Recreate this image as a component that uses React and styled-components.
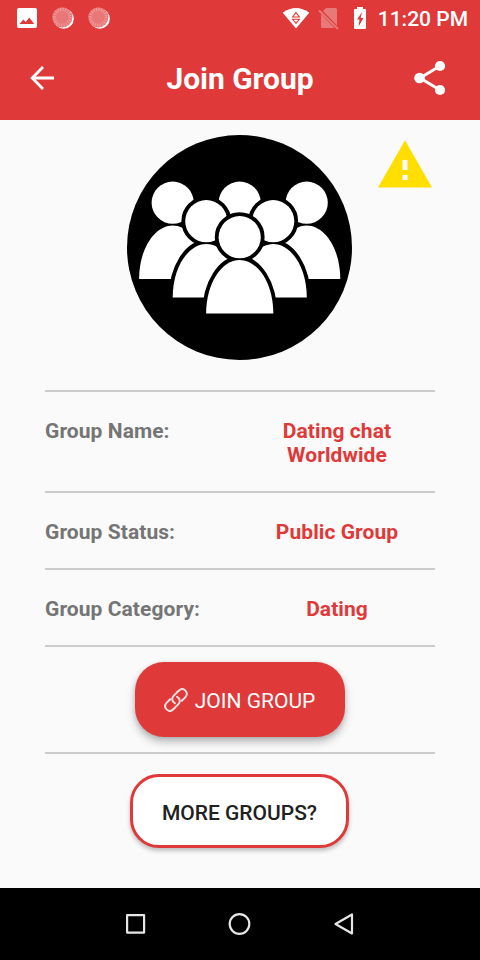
import React from "react";
import styled, { createGlobalStyle } from "styled-components";

const RED = "#df3939";

const GlobalStyle = createGlobalStyle`
  * { box-sizing: border-box; }
  body { margin: 0; background: #fafafa; }
`;

const Screen = styled.div`
  width: 480px;
  height: 960px;
  display: flex;
  flex-direction: column;
  overflow: hidden;
  background: #fafafa;
  font-family: Roboto, sans-serif;

  svg { display: block; flex: none; }
`;

const StatusBar = styled.div`
  height: 36px;
  display: flex;
  align-items: center;
  justify-content: space-between;
  padding: 0 12px 0 16px;
  background: ${RED};
`;

const StatusGroup = styled.div`
  display: flex;
  align-items: center;
  gap: ${(p) => p.$gap}px;
`;

const Clock = styled.span`
  margin-left: -2px;
  color: #fff;
  font-size: 21px;
  font-weight: 500;
  line-height: 24px;
  padding-top: 2px;
  white-space: nowrap;
`;

const AppBar = styled.header`
  height: 84px;
  display: grid;
  grid-template-columns: 84px 1fr 84px;
  align-items: center;
  justify-items: center;
  background: ${RED};
`;

const Title = styled.h1`
  margin: 0;
  padding-top: 1px;
  color: #fff;
  font-size: 30px;
  font-weight: 700;
  line-height: 36px;
  letter-spacing: -0.05px;
  white-space: nowrap;
`;

const IconButton = styled.button`
  width: 84px;
  height: 84px;
  display: flex;
  align-items: center;
  justify-content: center;
  border: 0;
  padding: 0 ${(p) => p.$inset || 0}px 0 0;
  background: none;
`;

const Content = styled.main`
  height: 768px;
  display: flex;
  flex-direction: column;
  padding: 15px 45px 0;
`;

const Hero = styled.section`
  height: 255px;
  display: grid;
  grid-template-columns: 82px 225px 1fr;
  align-items: start;

  svg:last-child { margin: 5px 0 0 26px; }
`;

const Row = styled.div`
  height: ${(p) => p.$height}px;
  display: flex;
  flex: none;
  padding-top: 27px;
  border-top: 2px solid #cccccc;
  font-size: 21px;
  font-weight: 700;
  line-height: 24px;
  letter-spacing: 0.07px;
`;

const Label = styled.span`
  width: 195px;
  color: #757575;
`;

const Value = styled.span`
  width: 150px;
  margin-left: 22px;
  color: ${RED};
  text-align: center;
`;

const ActionRow = styled.div`
  height: ${(p) => p.$height}px;
  display: flex;
  flex: none;
  justify-content: center;
  align-items: flex-start;
  padding-top: ${(p) => p.$top}px;
  border-top: 2px solid #cccccc;
`;

const PillButton = styled.button`
  display: flex;
  align-items: center;
  justify-content: center;
  padding: 2px 0 0;
  border: 0;
  font-family: inherit;
  font-size: 21px;
  line-height: 24px;
  white-space: nowrap;
`;

const JoinButton = styled(PillButton)`
  width: 210px;
  height: 75px;
  gap: 7px;
  padding-right: 1px;
  border-radius: 29px;
  color: #fff;
  background: ${RED};
  font-weight: 400;
  box-shadow: 0 5px 8px rgba(0, 0, 0, 0.26), 0 1px 4px rgba(0, 0, 0, 0.1);

  svg { margin-top: -2px; }
`;

const MoreButton = styled(PillButton)`
  width: 219px;
  height: 74px;
  margin-right: 1px;
  padding-top: 4px;
  border: 3px solid ${RED};
  border-radius: 29px;
  color: #212121;
  background: #fff;
  font-weight: 500;
  box-shadow: 0 3px 4px rgba(0, 0, 0, 0.24);
`;

const NavBar = styled.nav`
  height: 72px;
  display: flex;
  align-items: center;
  justify-content: center;
  gap: 80px;
  background: #000;
`;

function ImageIcon() {
  return (
    <svg width="22" height="22" viewBox="0 0 22 22">
      <rect x="1" y="1" width="20" height="20" rx="2" fill="#fff" />
      <path d="M3.5 17 7.3 12.5 9.8 15 13.3 10.5 18.2 17Z" fill={RED} />
    </svg>
  );
}

function DiscIcon() {
  return (
    <svg width="22" height="22" viewBox="0 0 22 22">
      <circle cx="11.7" cy="11.7" r="10.1" fill="#fff" />
      <circle cx="10.3" cy="10.3" r="10.1" fill="#ea7777" />
      <circle cx="10.3" cy="10.3" r="7.8" fill="none" stroke="#fff" strokeOpacity=".3" strokeWidth="3" strokeDasharray="1 1.45" />
    </svg>
  );
}

function WifiIcon() {
  return (
    <svg width="28" height="22" viewBox="0 0 28 22">
      <path d="M.7 5.7Q14-3.600 27.3 5.7L14 21.5Z" fill="#fff" />
      <path d="m14 5.500 3.300 4.500h-6.600Zm0 10.800 3.300-4h-6.600Z" fill="none" stroke={RED} strokeWidth="1.100" />
    </svg>
  );
}

function NoSimIcon() {
  return (
    <svg width="22" height="23" viewBox="0 0 22 23">
      <path d="M8 1h9.5A1.5 1.5 0 0 1 19 2.5V18.500L5 4Z" fill="#e87979" />
      <path d="M3 7v12.5A1.5 1.5 0 0 0 4.5 21H16.500Z" fill="#e87979" />
      <path d="M1 3.500 20 22" stroke="#e87979" strokeWidth="1.800" />
    </svg>
  );
}

function BatteryIcon() {
  return (
    <svg width="12" height="22" viewBox="0 0 12 22">
      <path d="M3 0h6v2h2q1 0 1 1v18q0 1-1 1H1q-1 0-1-1V3q0-1 1-1h2Z" fill="#fff" />
      <path d="M8 5 3 12.5h2.500L4.500 19.500 9.500 11H6.700Z" fill={RED} />
    </svg>
  );
}

function BackArrow() {
  return (
    <svg width="24" height="24" viewBox="0 0 24 24" fill="none" stroke="#fff" strokeWidth="2.8">
      <path d="M24 12H2.500M13 1 2.200 12 13 23" />
    </svg>
  );
}

function ShareIcon() {
  return (
    <svg width="32" height="36" viewBox="0 0 32 36">
      <path d="M26 6 6 18 26 30" fill="none" stroke="#fff" strokeWidth="3" />
      <g fill="#fff">
        <circle cx="26" cy="6" r="5.1" />
        <circle cx="5.5" cy="18" r="5.3" />
        <circle cx="26" cy="30" r="5.1" />
      </g>
    </svg>
  );
}

const PEOPLE = [
  [45.7, 67.7],
  [112.7, 67.7],
  [179.7, 67.7],
  [79.3, 86.2],
  [146.2, 86.2],
  [112.7, 102.2],
];

function GroupPicture() {
  return (
    <svg width="225" height="225" viewBox="0 0 225 225">
      <circle cx="112.5" cy="112.5" r="112.5" fill="#000" />
      {PEOPLE.map(([x, y]) => {
        const body = `M${x - 33.6} ${y + 76.4}C${x - 33.6} ${y + 46} ${x - 18} ${y + 22.7} ${x} ${y + 22.7}S${x + 33.6} ${y + 46} ${x + 33.6} ${y + 76.4}Z`;
        return (
          <g key={`${x}-${y}`}>
            <g stroke="#000" strokeWidth="7.6">
              <circle cx={x} cy={y} r="21.1" />
              <path d={body} />
            </g>
            <g fill="#fff">
              <circle cx={x} cy={y} r="21.1" />
              <path d={body} />
            </g>
          </g>
        );
      })}
    </svg>
  );
}

function WarningIcon() {
  return (
    <svg width="54" height="48" viewBox="0 0 54 48">
      <path d="M27 .3 54 47.5H0Z" fill="#ffde00" />
      <path d="M24.5 20h5v10h-5Zm0 15h5v5h-5Z" fill="#fafafa" />
    </svg>
  );
}

function LinkIcon() {
  return (
    <svg width="24" height="24" viewBox="0 0 24 24" fill="none" stroke="#fff" strokeOpacity=".85" strokeWidth="2" strokeLinecap="round">
      <path d="M10.8 15.200C7.700 13.600 7.400 10 9.800 7.600L14.400 3C16.600.8 19.400.6 21.400 2.600S23.200 7.400 21 9.600L17.800 12.800" />
      <path d="M13.200 8.800C16.300 10.400 16.600 14 14.200 16.400L9.600 21C7.400 23.200 4.600 23.400 2.600 21.400S.8 16.600 3 14.400L6.200 11.200" />
    </svg>
  );
}

function NavIcon({ children }) {
  return (
    <svg width="24" height="24" viewBox="0 0 24 24" fill="none" stroke="#e6e6e6" strokeWidth="2.2" strokeLinejoin="round">
      {children}
    </svg>
  );
}

export default function App() {
  return (
    <Screen>
      <GlobalStyle />
      <StatusBar>
        <StatusGroup $gap={14}>
          <ImageIcon />
          <DiscIcon />
          <DiscIcon />
        </StatusGroup>
        <StatusGroup $gap={14}>
          <StatusGroup $gap={8}>
            <WifiIcon />
            <NoSimIcon />
          </StatusGroup>
          <BatteryIcon />
          <Clock>11:20 PM</Clock>
        </StatusGroup>
      </StatusBar>
      <AppBar>
        <IconButton aria-label="Back"><BackArrow /></IconButton>
        <Title>Join Group</Title>
        <IconButton aria-label="Share" $inset={16}><ShareIcon /></IconButton>
      </AppBar>
      <Content>
        <Hero>
          <span />
          <GroupPicture />
          <WarningIcon />
        </Hero>
        <Row $height={101}>
          <Label>Group Name:</Label>
          <Value>Dating chat Worldwide</Value>
        </Row>
        <Row $height={77}>
          <Label>Group Status:</Label>
          <Value>Public Group</Value>
        </Row>
        <Row $height={77}>
          <Label>Group Category:</Label>
          <Value>Dating</Value>
        </Row>
        <ActionRow $height={107} $top={15}>
          <JoinButton><LinkIcon />JOIN GROUP</JoinButton>
        </ActionRow>
        <ActionRow $height={100} $top={20}>
          <MoreButton>MORE GROUPS?</MoreButton>
        </ActionRow>
      </Content>
      <NavBar>
        <NavIcon><rect x="3.1" y="3.1" width="17" height="17.5" /></NavIcon>
        <NavIcon><circle cx="11.5" cy="12" r="9.8" /></NavIcon>
        <NavIcon><path d="M20 2.500V21.500L3.500 12Z" /></NavIcon>
      </NavBar>
    </Screen>
  );
}
